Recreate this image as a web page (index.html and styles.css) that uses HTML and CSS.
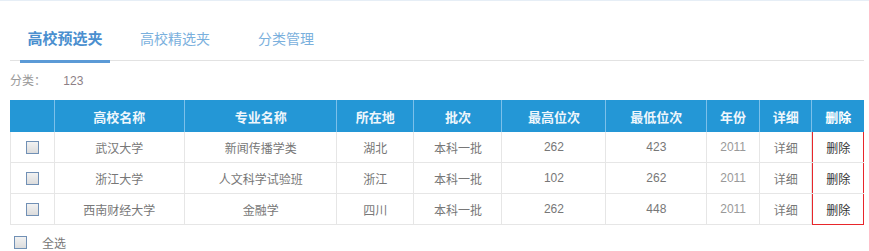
FILE: index.html
```html
<!DOCTYPE html>
<html lang="zh-CN">
<head>
    <meta charset="UTF-8">
    <title>高校预选夹</title>
    <link rel="stylesheet" href="styles.css">
</head>
<body>
    <div class="page">
        <!-- tabs -->
        <ul class="tabs">
            <li class="tab active">高校预选夹</li>
            <li class="tab">高校精选夹</li>
            <li class="tab">分类管理</li>
        </ul>

        <div class="category">
            <span class="category-label">分类：</span>
            <span class="category-value">123</span>
        </div>

        <table class="school-table">
            <thead>
                <tr>
                    <th class="col-check"></th>
                    <th class="col-school">高校名称</th>
                    <th class="col-major">专业名称</th>
                    <th class="col-place">所在地</th>
                    <th class="col-batch">批次</th>
                    <th class="col-high">最高位次</th>
                    <th class="col-low">最低位次</th>
                    <th class="col-year">年份</th>
                    <th class="col-detail">详细</th>
                    <th class="col-del">删除</th>
                </tr>
            </thead>
            <tbody>
                <tr>
                    <td><span class="check"></span></td>
                    <td>武汉大学</td>
                    <td>新闻传播学类</td>
                    <td>湖北</td>
                    <td>本科一批</td>
                    <td>262</td>
                    <td>423</td>
                    <td class="year">2011</td>
                    <td>详细</td>
                    <td class="del">删除</td>
                </tr>
                <tr>
                    <td><span class="check"></span></td>
                    <td>浙江大学</td>
                    <td>人文科学试验班</td>
                    <td>浙江</td>
                    <td>本科一批</td>
                    <td>102</td>
                    <td>262</td>
                    <td class="year">2011</td>
                    <td>详细</td>
                    <td class="del">删除</td>
                </tr>
                <tr>
                    <td><span class="check"></span></td>
                    <td>西南财经大学</td>
                    <td>金融学</td>
                    <td>四川</td>
                    <td>本科一批</td>
                    <td>262</td>
                    <td>448</td>
                    <td class="year">2011</td>
                    <td>详细</td>
                    <td class="del">删除</td>
                </tr>
            </tbody>
        </table>

        <div class="select-all">
            <span class="check"></span>
            <span class="select-all-text">全选</span>
        </div>
    </div>
</body>
</html>
```

FILE: styles.css
```css
/* --- General --- */
body {
    margin: 0;
    background-color: #fff;
    font-family: "Liberation Sans", "Noto Sans CJK SC", sans-serif;
    color: #666;
}

.page {
    border-top: 1px solid #e6eef6;
    padding: 0 5px 0 10px;
}

/* --- Tabs --- */
.tabs {
    list-style: none;
    margin: 0;
    padding: 0;
    display: flex;
    height: 60px;
    border-bottom: 1px solid #e2e2e2;
    box-sizing: border-box;
}
.tab {
    padding-top: 28px;
    font-size: 14px;
    line-height: 20px;
    color: #7ab0dd;
}
.tab:nth-child(1) {
    width: 100px;
    margin-left: 10px;
    text-align: center;
}
.tab:nth-child(2) {
    margin-left: 30px;
}
.tab:nth-child(3) {
    margin-left: 48px;
}
.tab.active {
    color: #4a8fcf;
    font-size: 15px;
    font-weight: bold;
    box-sizing: border-box;
    border-bottom: 3px solid #5b9ad6;
    height: 62px;
    width: 90px;
}

/* --- Category --- */
.category {
    height: 39px;
    line-height: 40px;
    font-size: 12px;
}
.category-label {
    color: #999;
}
.category-value {
    margin-left: 14px;
    color: #8d7f86;
}

/* --- Table --- */
.school-table {
    width: 854px;
    border-collapse: separate;
    border-spacing: 0;
    font-size: 12px;
    text-align: center;
}
.school-table th {
    height: 32px;
    padding: 0;
    background-color: #2497d6;
    color: #eef6fc;
    font-size: 13px;
    font-weight: bold;
    border-right: 1px solid #7cc0ea;
}
.school-table th:last-child { border-right: none; color: #fff; }
.school-table td {
    height: 30px;
    padding: 0;
    border-right: 1px solid #e6e6e6;
    border-bottom: 1px solid #e6e6e6;
    color: #777;
}
.school-table td:first-child { border-left: 1px solid #e6e6e6; }
.col-check { width: 44px; }
.col-school { width: 131px; }
.col-major { width: 153px; }
.col-place { width: 77px; }
.col-batch { width: 88px; }
.col-high { width: 104px; }
.col-low { width: 101px; }
.col-year { width: 52px; }
.col-detail { width: 52px; }
.col-del { width: 52px; }

.school-table td.year {
    color: #999;
}
/* red frame around the delete column */
.school-table td.del {
    color: #333;
    border-right: none;
    box-shadow: inset 1px 0 #e8262b, inset -1px 0 #e8262b;
}
.school-table tbody tr:last-child td.del {
    border-bottom: none;
    box-shadow: inset 1px 0 #e8262b, inset -1px 0 #e8262b, inset 0 -1px #e8262b;
}

/* --- Checkbox --- */
.check {
    display: inline-block;
    width: 11px;
    height: 11px;
    border: 1px solid #7190b5;
    background: linear-gradient(#f2f2f2, #dcdcdc);
    vertical-align: middle;
}

.select-all {
    margin-top: 9px;
    padding-left: 4px;
    font-size: 12px;
    display: flex;
    align-items: center;
}
.select-all-text {
    margin-left: 15px;
    color: #777;
}
```
